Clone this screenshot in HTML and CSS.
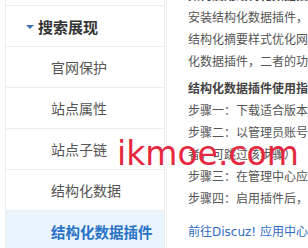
FILE: index.html
```html
<!DOCTYPE html>
<html lang="zh-CN">
<head>
<meta charset="utf-8">
<link rel="stylesheet" href="styles.css">
</head>
<body>
<div class="page">
  <aside class="sidebar">
    <div class="menu">
      <div class="group"><span class="tri"></span>搜索展现</div>
      <div class="item">官网保护</div>
      <div class="item">站点属性</div>
      <div class="item">站点子链</div>
      <div class="item">结构化数据</div>
      <div class="item active">结构化数据插件</div>
    </div>
  </aside>
  <main class="content">
    <div class="line head cut">如何启用结构化数据插件呢？如何启用</div>
    <div class="para">
      <div class="line">安装结构化数据插件，前往百度站长平台</div>
      <div class="line">结构化摘要样式优化网站展现结构</div>
      <div class="line">化数据插件，二者的功能完全相同</div>
    </div>
    <div class="para">
      <div class="line head">结构化数据插件使用指南</div>
      <div class="line">步骤一：下载适合版本的插件</div>
      <div class="line">步骤二：以管理员账号登录论坛</div>
      <div class="line">者，可跳过该步骤）</div>
      <div class="line">步骤三：在管理中心应用中安装</div>
      <div class="line">步骤四：启用插件后，验证站点</div>
    </div>
    <div class="line link">前往Discuz! 应用中心下载插件</div>
  </main>
  <div class="watermark">ikmoe.com</div>
</div>
</body>
</html>
```
FILE: styles.css
```css
html, body {
  margin: 0;
  padding: 0;
  background: #fff;
}
.page {
  position: relative;
  width: 308px;
  height: 248px;
  overflow: hidden;
  display: flex;
  font-family: "Noto Sans CJK SC", "Noto Sans", sans-serif;
}
.sidebar {
  width: 158px;
  flex: none;
  margin-left: 5px;
  border-left: 1px solid #ececec;
  border-right: 1px solid #ececec;
  padding-top: 5px;
}
.menu {
  border-top: 1px solid #ececec;
}
.group, .item {
  height: 40px;
  border-bottom: 1px solid #eeeeee;
  display: flex;
  align-items: center;
  white-space: nowrap;
}
.group {
  padding-left: 32px;
  font-size: 15px;
  font-weight: bold;
  color: #333;
  position: relative;
}
.tri {
  width: 0;
  height: 0;
  border-left: 4px solid transparent;
  border-right: 4px solid transparent;
  border-top: 4px solid #3b6fb6;
  position: absolute;
  left: 20px;
  top: 19px;
}
.item {
  padding-left: 45px;
  font-size: 14px;
  color: #555;
}
.item.active {
  background: #eaf4fd;
  color: #2b73c6;
  font-weight: bold;
  font-size: 14.5px;
}
.content {
  flex: none;
  width: 200px;
  padding-left: 21px;
  margin-left: 1px;
  border-left: 1px solid #f2f2f2;
  margin-top: -16px;
  font-size: 12px;
  color: #555;
}
.line {
  height: 22px;
  line-height: 22px;
  white-space: nowrap;
}
.head {
  font-weight: bold;
  color: #444;
}
.para {
  margin-bottom: 5px;
}
.link {
  margin-top: 12px;
  color: #2f6bc2;
  font-family: "DejaVu Sans", "Noto Sans CJK SC", sans-serif;
}
.watermark {
  position: absolute;
  left: 117px;
  top: 134px;
  font-family: "DejaVu Sans", sans-serif;
  font-size: 33px;
  color: #e6283f;
  white-space: nowrap;
}
```
